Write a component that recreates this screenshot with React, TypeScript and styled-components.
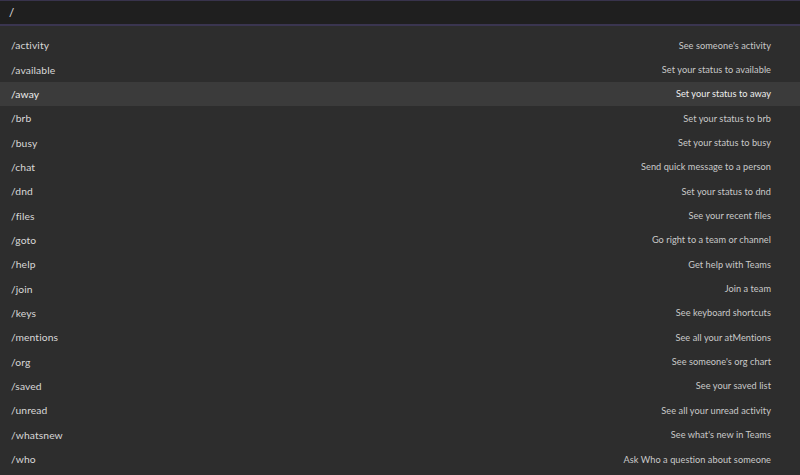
import styled, { createGlobalStyle } from 'styled-components'

const GlobalStyle = createGlobalStyle`
  html, body {
    margin: 0;
    padding: 0;
    background: #2d2d2d;
  }
  body {
    font-family: Lato, 'Open Sans', sans-serif;
    -webkit-font-smoothing: antialiased;
  }
`

const Page = styled.div`
  width: 800px;
  height: 475px;
  overflow: hidden;
  display: flex;
  flex-direction: column;
  background: #2d2d2d;
`

const InputBar = styled.div`
  height: 23px;
  border-top: 1px solid #38334c;
  border-bottom: 2px solid #3a3550;
  background: #1f1f1f;
  display: flex;
  align-items: center;
  padding: 0 9px;
  color: #e6e6e6;
  font-size: 11.5px;
`

const List = styled.ul`
  list-style: none;
  margin: 0;
  padding: 7px 0 0;
  display: flex;
  flex-direction: column;
`

const Row = styled.li<{ $active?: boolean }>`
  height: 24.35px;
  display: flex;
  align-items: center;
  justify-content: space-between;
  padding: 0 29px 0 11px;
  background: ${(p) => (p.$active ? '#3b3b3b' : 'transparent')};
`

const Command = styled.span<{ $active?: boolean }>`
  font-size: 10.3px;
  letter-spacing: 0.1px;
  color: ${(p) => (p.$active ? '#eeeeee' : '#d8d8d8')};
`

const Hint = styled.span<{ $active?: boolean }>`
  font-size: 9.2px;
  letter-spacing: 0.05px;
  color: ${(p) => (p.$active ? '#f0f0f0' : '#c9c9c9')};
`

const commands = [
  ['/activity', "See someone's activity"],
  ['/available', 'Set your status to available'],
  ['/away', 'Set your status to away'],
  ['/brb', 'Set your status to brb'],
  ['/busy', 'Set your status to busy'],
  ['/chat', 'Send quick message to a person'],
  ['/dnd', 'Set your status to dnd'],
  ['/files', 'See your recent files'],
  ['/goto', 'Go right to a team or channel'],
  ['/help', 'Get help with Teams'],
  ['/join', 'Join a team'],
  ['/keys', 'See keyboard shortcuts'],
  ['/mentions', 'See all your atMentions'],
  ['/org', "See someone's org chart"],
  ['/saved', 'See your saved list'],
  ['/unread', 'See all your unread activity'],
  ['/whatsnew', "See what's new in Teams"],
  ['/who', 'Ask Who a question about someone'],
]

const App = () => {
  return (
    <>
      <GlobalStyle />
      <Page>
        <InputBar>/</InputBar>
        <List>
          {commands.map(([cmd, hint]) => {
            const active = cmd === '/away'
            return (
              <Row key={cmd} $active={active}>
                <Command $active={active}>{cmd}</Command>
                <Hint $active={active}>{hint}</Hint>
              </Row>
            )
          })}
        </List>
      </Page>
    </>
  )
}

export default App
